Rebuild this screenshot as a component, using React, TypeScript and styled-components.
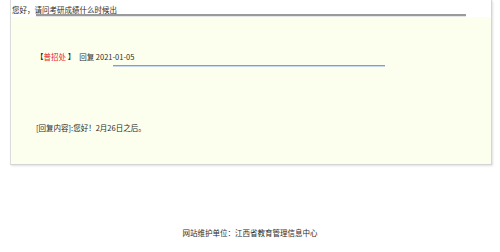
import styled, { createGlobalStyle } from 'styled-components'

const GlobalStyle = createGlobalStyle`
  html, body {
    margin: 0;
    padding: 0;
    background: #ffffff;
  }
  body {
    font-family: "Noto Sans CJK SC", "Liberation Sans", sans-serif;
    color: #2b2b2b;
  }
`

export default function App() {
  return (
    <>
      <GlobalStyle />
      <Page>
        <Panel>
          <TitleBar>
            <Title>您好，请问考研成绩什么时候出</Title>
            <TitleRule />
          </TitleBar>
          <Body>
            <ReplyHead>
              <Bracket>【</Bracket>
              <Office>普招处</Office>
              <Bracket>&nbsp;】</Bracket>
              <Meta>回复 2021-01-05</Meta>
            </ReplyHead>
            <ReplyRule />
            <ReplyText>[回复内容]:您好！2月26日之后。</ReplyText>
          </Body>
        </Panel>
        <Footer>网站维护单位：江西省教育管理信息中心</Footer>
      </Page>
    </>
  )
}

const Page = styled.div`
  width: 500px;
  height: 252px;
  display: flex;
  flex-direction: column;
`

const Panel = styled.div`
  margin-left: 10px;
  width: 480px;
  border-left: 1px solid #dcdcdc;
  border-right: 1px solid #d4d4d4;
  border-bottom: 1px solid #d4d4d4;
  box-shadow: 1px 1px 2px rgba(0, 0, 0, 0.12);
`

const TitleBar = styled.div`
  height: 17px;
  background: #ffffff;
  display: flex;
  flex-direction: column;
`

const Title = styled.div`
  padding: 5px 0 0 1px;
  font-size: 7.5px;
  line-height: 9px;
  white-space: nowrap;
`

const TitleRule = styled.div`
  margin-left: 25px;
  width: 430px;
  height: 2px;
  background: #9a9a9a;
  border-bottom: 1px solid #e6e6e6;
`

const Body = styled.div`
  height: 147px;
  background: #fdffee;
  display: flex;
  flex-direction: column;
  padding-left: 25px;
`

const ReplyHead = styled.div`
  margin-top: 35px;
  height: 10px;
  display: flex;
  align-items: center;
  font-size: 7.5px;
  line-height: 10px;
  white-space: nowrap;
`

const Bracket = styled.span`
  color: #2b2b2b;
`

const Office = styled.span`
  color: #e8271d;
`

const Meta = styled.span`
  margin-left: 4px;
`

const ReplyRule = styled.div`
  margin: 3px 0 0 77px;
  width: 272px;
  height: 0;
  flex-shrink: 0;
  border-top: 1px solid #7aa0dc;
  border-bottom: 1px solid #c9d7ef;
`

const ReplyText = styled.div`
  margin-top: 56px;
  font-size: 7.5px;
  line-height: 10px;
  white-space: nowrap;
`

const Footer = styled.div`
  margin-top: 63px;
  text-align: center;
  font-size: 7.5px;
  line-height: 10px;
`
